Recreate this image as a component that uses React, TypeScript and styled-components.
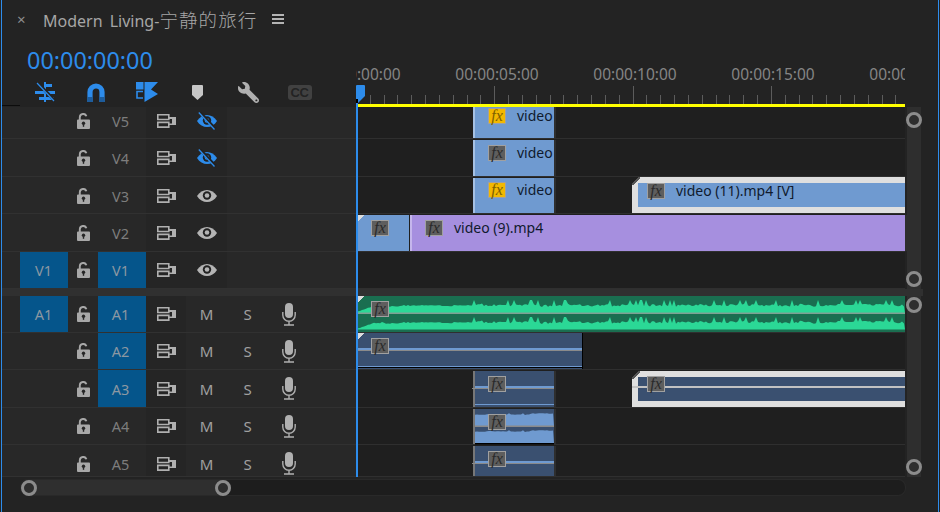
import React from "react";
import styled, { createGlobalStyle } from "styled-components";
import { FaWrench } from "react-icons/fa";

const BLUE = "#2d8ceb";
const ICON = "#b0b0b0";
const CLIP_BLUE = "#6f9ad0";
const SLATE = "#3a5070";

const GlobalStyle = createGlobalStyle`
  html, body {
    margin: 0;
    background: #232323;
  }
  * {
    box-sizing: border-box;
  }
`;

const Panel = styled.div`
  position: relative;
  width: 938px;
  height: 512px;
  margin-left: 1px;
  overflow: hidden;
  background: #232323;
  border-left: 1px solid ${BLUE};
  border-right: 1px solid ${BLUE};
  font-family: "Noto Sans", "Noto Sans CJK SC", sans-serif;
  color: #a8a8a8;
`;

const TitleBar = styled.div`
  display: flex;
  align-items: center;
  height: 38px;
  padding-left: 15px;
`;

const CloseMark = styled.span`
  width: 26px;
  font-size: 15px;
  color: #8f8f8f;
`;

const Title = styled.span`
  font-size: 16px;
  word-spacing: 3px;
  white-space: nowrap;
  color: #a6a6a6;
`;

const TitleCjk = styled.span`
  font-family: "Noto Sans CJK SC", sans-serif;
  font-size: 18.5px;
  font-weight: 300;
  letter-spacing: 1.1px;
`;

const Menu = styled.span`
  width: 12px;
  height: 10px;
  margin-left: 15px;
  border-top: 2px solid #b4b4b4;
  border-bottom: 2px solid #b4b4b4;
  background: linear-gradient(#b4b4b4, #b4b4b4) center / 100% 2px no-repeat;
`;

const TopSection = styled.div`
  display: grid;
  grid-template-columns: 354px 549px;
  height: 69px;
`;

const Controls = styled.div`
  position: relative;
  padding: 8px 0 0 25px;
  &::after {
    content: "";
    position: absolute;
    left: 0;
    bottom: 1px;
    width: 18px;
    height: 1px;
    background: #0c0c0c;
  }
`;

const Timecode = styled.div`
  font-size: 23.4px;
  line-height: 28px;
  color: ${BLUE};
`;

const Tools = styled.div`
  display: flex;
  margin: 6px 0 0 -8px;
`;

const Tool = styled.div`
  display: flex;
  align-items: center;
  justify-content: center;
  width: 51px;
  height: 24px;
`;

const CcBadge = styled.span`
  width: 24px;
  height: 15px;
  border-radius: 3px;
  background: #414141;
  color: #232323;
  font: bold 13px/15px "Liberation Sans", sans-serif;
  text-align: center;
  letter-spacing: -0.5px;
`;

const RulerColumn = styled.div`
  display: flex;
  flex-direction: column;
`;

const Ruler = styled.div`
  position: relative;
  flex: 1;
  overflow: hidden;
`;

const RulerLabel = styled.span<{ $x: number }>`
  position: absolute;
  top: 25px;
  left: ${(p) => p.$x - 42}px;
  width: 84px;
  text-align: center;
  font-size: 15.5px;
  line-height: 22px;
  color: #858585;
`;

const TickLayer = styled.svg`
  position: absolute;
  left: 0;
  bottom: 0;
`;

const YellowBar = styled.div`
  height: 3px;
  margin-left: 2px;
  background: #ffff00;
`;

const TrackGroup = styled.div`
  display: flex;
`;

const Rows = styled.div`
  width: 903px;
`;

const Rail = styled.div<{ $pad: number }>`
  display: flex;
  flex-direction: column;
  justify-content: space-between;
  align-items: center;
  width: 14px;
  margin-left: 2px;
  padding: ${(p) => p.$pad}px 0 2px;
  background: #2e2e2e;
`;

const Knob = styled.span`
  flex: none;
  width: 16px;
  height: 16px;
  border-radius: 50%;
  border: 3px solid #8c8c8c;
  background: #2e2e2e;
`;

const GroupGap = styled.div`
  height: 7px;
  width: 921px;
  background: #303030;
`;

const Row = styled.div<{ $h: number }>`
  display: grid;
  grid-template-columns: 354px 549px;
  height: ${(p) => p.$h}px;
`;

const RowHead = styled.div`
  display: grid;
  grid-template-columns: 18px 48px 30px 48px 40px 41px 41px 41px;
  background: #282828;
  border-bottom: 1px solid #313131;
`;

const Cell = styled.div<{ $dim?: boolean; $nudge: number }>`
  display: flex;
  align-items: center;
  justify-content: center;
  padding: ${(p) => Math.max(p.$nudge, 0)}px 0 ${(p) => Math.max(-p.$nudge, 0)}px;
  background: ${(p) => (p.$dim ? "#252525" : "transparent")};
`;

const Patch = styled.div<{ $on?: boolean; $nudge: number; $trim: number }>`
  display: flex;
  align-items: center;
  justify-content: center;
  padding: ${(p) => Math.max(p.$nudge, 0)}px ${(p) => p.$trim}px ${(p) => Math.max(-p.$nudge, 0)}px 0;
  font-size: 14.5px;
  color: ${(p) => (p.$on ? "#8c98a2" : "#7d7d7d")};
  background: ${(p) => (p.$on ? "#05558b" : "transparent")};
`;

const Solo = styled.span`
  font-size: 15px;
  color: #a0a0a0;
`;

const Lane = styled.div`
  position: relative;
  background: #1f1f1f;
  border-bottom: 1px solid #2f2f2f;
`;

type ClipKind = "video" | "purple" | "selected" | "audio" | "audioSelected" | "wave";

const clipFill: Record<ClipKind, string> = {
  video: CLIP_BLUE,
  purple: "#a68fdf",
  selected: CLIP_BLUE,
  audio: SLATE,
  audioSelected: SLATE,
  wave: "#1a6e50",
};

const clipShadow = (kind: ClipKind, edge?: string, cap?: boolean) => {
  if (kind === "selected" || kind === "audioSelected") {
    return "inset 6px 0 0 #dfdfdf, inset 0 6px 0 #dfdfdf, inset 0 -6px 0 #dfdfdf";
  }
  if (cap) return "1px 0 0 #000";
  return edge ? "2px 0 0 #2e2e2e" : "none";
};

const Clip = styled.div<{
  $x: number;
  $w: number;
  $kind: ClipKind;
  $top: number;
  $pad: number;
  $inset: number;
  $edge?: string;
  $cap?: boolean;
}>`
  position: absolute;
  left: ${(p) => p.$x}px;
  width: ${(p) => p.$w}px;
  top: ${(p) => p.$top}px;
  bottom: 0;
  display: flex;
  align-items: flex-start;
  gap: 11px;
  padding: ${(p) => p.$pad}px 0 0 ${(p) => p.$inset}px;
  background: ${(p) => clipFill[p.$kind]};
  border-left: ${(p) => (p.$edge ? `2px solid ${p.$edge}` : "none")};
  box-shadow: ${(p) => clipShadow(p.$kind, p.$edge, p.$cap)};
`;

const Corner = styled.span<{ $dark?: boolean }>`
  position: absolute;
  left: 0;
  top: 0;
  width: 8px;
  height: 8px;
  background: ${(p) =>
    p.$dark
      ? "linear-gradient(135deg, #1f1f1f 42%, #555 42%, #555 58%, transparent 58%)"
      : "linear-gradient(135deg, #dcdcdc 40%, transparent 40%)"};
`;

const Fx = styled.span<{ $on?: boolean }>`
  position: relative;
  z-index: 1;
  flex: none;
  width: 18px;
  height: 16px;
  border: 1.500px solid #a0a0a0;
  background: ${(p) => (p.$on ? "#f2b800" : "#5e5e5e")};
  color: ${(p) => (p.$on ? "#7d6000" : "#2a2a2a")};
  font: italic 16px/13px "Liberation Serif", serif;
  text-align: center;
`;

const ClipName = styled.span`
  position: relative;
  z-index: 1;
  font-size: 14px;
  line-height: 16px;
  color: #101a2e;
  white-space: nowrap;
`;

const Level = styled.span<{ $y: number; $h: number; $c: string; $from: number }>`
  position: absolute;
  left: ${(p) => p.$from}px;
  right: 0;
  top: ${(p) => p.$y}px;
  height: ${(p) => p.$h}px;
  background: ${(p) => p.$c};
`;

const WaveArt = styled.svg`
  position: absolute;
  left: 0;
  top: 0;
`;

const PlayheadWrap = styled.div`
  position: absolute;
  left: 354px;
  top: 85px;
  width: 9px;
  height: 392px;
  z-index: 3;
`;

const PlayheadHead = styled.svg`
  display: block;
`;

const PlayheadLine = styled.div`
  width: 2px;
  height: 374px;
  background: ${BLUE};
`;

const Footer = styled.div`
  padding: 3px 0 0 19px;
`;

const Trough = styled.div`
  display: flex;
  width: 884px;
  height: 15px;
  border-radius: 7px;
  background: #1d1d1d;
  box-shadow: 0 0 0 1px #292929;
`;

const Thumb = styled.div`
  display: flex;
  justify-content: space-between;
  align-items: center;
  width: 210px;
  border-radius: 7px;
  background: #2f2f2f;
`;

// ---- drawings

const Lock = () => (
  <svg width="13" height="16" viewBox="0 0 13 16">
    <path d="M2.800 7V4.200a3.400 3.400 0 0 1 6.600-1" fill="none" stroke="#a8a8a8" strokeWidth="1.900" />
    <path d="M1 6.500h11a1 1 0 0 1 1 1V15a1 1 0 0 1-1 1H1a1 1 0 0 1-1-1V7.500a1 1 0 0 1 1-1z" fill="#a8a8a8" />
    <circle cx="6.500" cy="10.300" r="1.700" fill="#262626" />
    <rect x="5.800" y="10.500" width="1.400" height="3.300" fill="#262626" />
  </svg>
);

const Sync = () => (
  <svg width="19" height="14" viewBox="0 0 19 14">
    <path d="M.8.800h11v4.700H.8zM.8 8.400h11v4.700H.8z" fill="none" stroke={ICON} strokeWidth="1.600" />
    <path d="M12 3h7v8h-7V9.500h3V5h-3z" fill={ICON} />
  </svg>
);

const Eye = ({ off }: { off?: boolean }) => {
  const c = off ? BLUE : "#b4b4b4";
  return (
    <svg width="20" height="18" viewBox="0 0 20 18">
      <path d="M0 9C5 1 15 1 20 9c-5 8-15 8-20 0z" fill={c} />
      <circle cx="10" cy="8.500" r="4.200" fill="#222" />
      <circle cx="10" cy="8.500" r="2.300" fill={c} />
      {off && (
        <>
          <path d="M3 .5 18.500 17" stroke="#222" strokeWidth="3" />
          <path d="M1.800.500 17.500 17.500" stroke={BLUE} strokeWidth="1.300" />
        </>
      )}
    </svg>
  );
};

const Mic = () => (
  <svg width="14" height="23" viewBox="0 0 14 23">
    <rect x="3" y="0" width="8" height="15" rx="4" fill={ICON} />
    <path d="M.8 9v3a6.200 6.200 0 0 0 12.400 0V9M7 18.200V22M2 22h10" fill="none" stroke={ICON} strokeWidth="1.400" />
  </svg>
);

const NestIcon = () => (
  <svg width="22" height="20" viewBox="0 0 22 20">
    <g fill={BLUE}>
      <rect x="10" y="0" width="2" height="20" />
      <rect x="12" y="2" width="6" height="3" />
      <rect x="1" y="9" width="9" height="3" />
      <rect x="12" y="9" width="9" height="3" />
      <rect x="5" y="15" width="5" height="3" />
      <rect x="12" y="15" width="8" height="3" />
    </g>
    <path d="M3 0 21 19" stroke="#232323" strokeWidth="3" />
    <path d="M3 1 20 19" stroke={BLUE} strokeWidth="1.200" />
  </svg>
);

const Magnet = () => (
  <svg width="18" height="19" viewBox="0 0 18 19">
    <path d="M3 19V9a6 6 0 0 1 12 0v10" fill="none" stroke={BLUE} strokeWidth="5.200" />
    <path d="M3 19v-5M15 19v-5" fill="none" stroke="#1d5c9c" strokeWidth="5.200" />
  </svg>
);

const LinkedSelect = () => (
  <svg width="22" height="20" viewBox="0 0 22 20">
    <rect x="0" y="0" width="7.500" height="7.500" fill={BLUE} />
    <path d="M8.500 0H22l-7 7.500L22 12 8.500 20z" fill={BLUE} />
    <path d="M7 9.500H1v6.500h6" fill="none" stroke={BLUE} strokeWidth="1.600" />
  </svg>
);

const Marker = () => (
  <svg width="11" height="15" viewBox="0 0 11 15">
    <path d="M1 0h9a1 1 0 0 1 1 1v9l-5.500 5L0 10V1a1 1 0 0 1 1-1z" fill="#c6c6c6" />
  </svg>
);

const MirroredWrench = styled(FaWrench)`
  width: 21px;
  height: 21px;
  color: ${ICON};
  transform: scaleX(-1);
`;

// pseudo random but stable from one render to the next
const noise = (seed: number, i: number) => {
  const v = Math.sin(i * 127.1 + seed * 311.7 + i * i * 0.37) * 43758.5453;
  return v - Math.floor(v);
};

const wavePoints = (
  width: number,
  seed: number,
  floor: number,
  base: (x: number) => number,
  swing: (x: number) => number,
) => {
  let d = `M0 ${floor}`;
  for (let x = 0; x <= width; x += 2) {
    const n = noise(seed, x / 2);
    const chunk = noise(seed + 1, Math.floor(x / 14)) * 1.400;
    const peak = n > 0.88 ? swing(x) * 1.400 : n * swing(x) * 0.500 + chunk;
    d += `L${x} ${(base(x) - peak).toFixed(1)}`;
  }
  return `${d}L${width} ${floor}Z`;
};

const GreenWave = ({ width }: { width: number }) => {
  const ramp = (x: number) => Math.max(0, 5 - x / 3);
  const swing = (x: number) => (x < 115 ? 1.500 : 5);
  return (
    <WaveArt width={width} height="37" viewBox={`0 0 ${width} 37`}>
      <path d={wavePoints(width, 3, 17, (x) => 11 + ramp(x), swing)} fill="#2bd896" />
      <rect x="0" y="16.500" width={width} height="1.500" fill="#7f9f93" />
      <path d={wavePoints(width, 3, 33.500, (x) => 28 + ramp(x), swing)} fill="#2bd896" />
    </WaveArt>
  );
};

const BlueWave = ({ width }: { width: number }) => {
  const swing = () => 1.200;
  return (
    <WaveArt width={width} height="36" viewBox={`0 0 ${width} 36`}>
      <path d={wavePoints(width, 7, 17, () => 6, swing)} fill={CLIP_BLUE} />
      <rect x="0" y="16.500" width={width} height="1.500" fill="#8a8a8a" />
      <path d={wavePoints(width, 7, 34, () => 23, swing)} fill={CLIP_BLUE} />
      <rect x="0" y="34" width={width} height="1.500" fill="#000" />
    </WaveArt>
  );
};

// ---- data

type LevelLine = { y: number; h: number; c: string; from?: number };

type ClipData = {
  x: number;
  w: number;
  kind: ClipKind;
  fx?: boolean;
  name?: string;
  top?: number;
  pad?: number;
  inset?: number;
  edge?: string;
  corner?: boolean;
  cap?: boolean;
  lines?: LevelLine[];
  art?: "green" | "blue";
};

type Track = {
  label: string;
  h: number;
  nudge?: number;
  source?: string;
  target?: boolean;
  eyeOff?: boolean;
  clips: ClipData[];
};

const shortVideo = (fx: boolean, pad: number): ClipData => ({
  x: 117,
  w: 81,
  kind: "video",
  fx,
  name: "video",
  edge: "#a5c0e3",
  inset: 13,
  pad,
  top: 1,
});

const shortAudio = (lines?: LevelLine[], art?: "blue"): ClipData => ({
  x: 117,
  w: 81,
  kind: "audio",
  edge: "#777",
  inset: 13,
  lines,
  art,
});

const grey: LevelLine = { y: 17, h: 1, c: "#8a8a8a", from: -3 };
const blueBand: LevelLine = { y: 15, h: 2, c: CLIP_BLUE };

const videoTracks: Track[] = [
  { label: "V5", h: 32, nudge: -4, eyeOff: true, clips: [{ ...shortVideo(true, 1), top: 0 }] },
  { label: "V4", h: 38, eyeOff: true, clips: [shortVideo(false, 5)] },
  {
    label: "V3",
    h: 37,
    nudge: 1,
    clips: [
      shortVideo(true, 4),
      { x: 276, w: 273, kind: "selected", name: "video (11).mp4 [V]", top: 0, pad: 6, corner: true },
    ],
  },
  {
    label: "V2",
    h: 38,
    clips: [
      { x: 2, w: 51, kind: "video", inset: 13, corner: true },
      { x: 54, w: 495, kind: "purple", name: "video (9).mp4", edge: "#c5b6ec", inset: 13 },
    ],
  },
  { label: "V1", h: 37, source: "V1", target: true, clips: [] },
];

const audioTracks: Track[] = [
  {
    label: "A1",
    h: 37,
    source: "A1",
    target: true,
    clips: [{ x: 2, w: 547, kind: "wave", top: 0, inset: 13, corner: true, art: "green" }],
  },
  {
    label: "A2",
    h: 37,
    target: true,
    clips: [
      {
        x: 2,
        w: 224,
        kind: "audio",
        top: 0,
        inset: 13,
        corner: true,
        cap: true,
        lines: [blueBand, { y: 17, h: 1, c: "#8a8a8a" }, { y: 33, h: 1, c: CLIP_BLUE }, { y: 34, h: 1, c: "#000" }],
      },
    ],
  },
  {
    label: "A3",
    h: 38,
    target: true,
    clips: [
      shortAudio([blueBand, grey, { y: 33, h: 1, c: CLIP_BLUE }]),
      { x: 276, w: 273, kind: "audioSelected", corner: true, lines: [{ y: 15, h: 2, c: "#c2c2c2" }] },
    ],
  },
  { label: "A4", h: 37, clips: [shortAudio(undefined, "blue")] },
  { label: "A5", h: 32, nudge: 6, clips: [shortAudio([blueBand, grey])] },
];

const rulerLabels = [3, 141, 279, 417, 555];
const PX_PER_TICK = 13.83;

const ClipView = ({ clip }: { clip: ClipData }) => (
  <Clip
    $x={clip.x}
    $w={clip.w}
    $kind={clip.kind}
    $top={clip.top ?? 1}
    $pad={clip.pad ?? 5}
    $inset={clip.inset ?? 15}
    $edge={clip.edge}
    $cap={clip.cap}
  >
    {clip.art === "green" && <GreenWave width={clip.w} />}
    {clip.art === "blue" && <BlueWave width={clip.w - 2} />}
    {clip.lines?.map((line) => (
      <Level key={`${line.y}${line.c}`} $y={line.y} $h={line.h} $c={line.c} $from={line.from ?? 0} />
    ))}
    {clip.corner && <Corner $dark={clip.kind === "selected" || clip.kind === "audioSelected"} />}
    <Fx $on={clip.fx}>fx</Fx>
    {clip.name && <ClipName>{clip.name}</ClipName>}
  </Clip>
);

const TrackRow = ({ track, audio }: { track: Track; audio?: boolean }) => {
  const nudge = track.nudge ?? 0;
  return (
    <Row $h={track.h}>
      <RowHead>
        <span />
        <Patch $on={!!track.source} $nudge={nudge} $trim={1}>
          {track.source}
        </Patch>
        <Cell $nudge={nudge}>
          <Lock />
        </Cell>
        <Patch $on={track.target} $nudge={nudge} $trim={3}>
          {track.label}
        </Patch>
        <Cell $dim $nudge={nudge}>
          <Sync />
        </Cell>
        {audio ? (
          <>
            <Cell $nudge={nudge}>
              <Solo>M</Solo>
            </Cell>
            <Cell $nudge={nudge}>
              <Solo>S</Solo>
            </Cell>
            <Cell $nudge={nudge}>
              <Mic />
            </Cell>
          </>
        ) : (
          <Cell $dim $nudge={nudge}>
            <Eye off={track.eyeOff} />
          </Cell>
        )}
      </RowHead>
      <Lane>
        {track.clips.map((clip) => (
          <ClipView key={`${clip.kind}${clip.x}`} clip={clip} />
        ))}
      </Lane>
    </Row>
  );
};

const App: React.FC = () => (
  <Panel>
    <GlobalStyle />
    <TitleBar>
      <CloseMark>×</CloseMark>
      <Title>
        Modern Living-<TitleCjk>宁静的旅行</TitleCjk>
      </Title>
      <Menu />
    </TitleBar>

    <TopSection>
      <Controls>
        <Timecode>00:00:00:00</Timecode>
        <Tools>
          <Tool>
            <NestIcon />
          </Tool>
          <Tool>
            <Magnet />
          </Tool>
          <Tool>
            <LinkedSelect />
          </Tool>
          <Tool>
            <Marker />
          </Tool>
          <Tool>
            <MirroredWrench />
          </Tool>
          <Tool>
            <CcBadge>CC</CcBadge>
          </Tool>
        </Tools>
      </Controls>
      <RulerColumn>
        <Ruler>
          {rulerLabels.map((x, i) => (
            <RulerLabel key={x} $x={x}>
              00:00:{String(i * 5).padStart(2, "0")}:00
            </RulerLabel>
          ))}
          <TickLayer width="549" height="20">
            {Array.from({ length: 40 }, (_, i) => {
              const x = Math.round(i * PX_PER_TICK) + 0.5;
              return <line key={i} x1={x} x2={x} y1={i % 10 === 0 ? 2 : 11} y2="20" stroke="#5c5c5c" />;
            })}
          </TickLayer>
        </Ruler>
        <YellowBar />
      </RulerColumn>
    </TopSection>

    <TrackGroup>
      <Rows>
        {videoTracks.map((track) => (
          <TrackRow key={track.label} track={track} />
        ))}
      </Rows>
      <Rail $pad={5}>
        <Knob />
        <Knob />
      </Rail>
    </TrackGroup>
    <GroupGap />
    <TrackGroup>
      <Rows>
        {audioTracks.map((track) => (
          <TrackRow key={track.label} track={track} audio />
        ))}
      </Rows>
      <Rail $pad={1}>
        <Knob />
        <Knob />
      </Rail>
    </TrackGroup>

    <Footer>
      <Trough>
        <Thumb>
          <Knob />
          <Knob />
        </Thumb>
      </Trough>
    </Footer>

    <PlayheadWrap>
      <PlayheadHead width="9" height="18" viewBox="0 0 9 18">
        <path d="M0 1a1 1 0 0 1 1-1h7a1 1 0 0 1 1 1v10l-7 7H0z" fill={BLUE} />
        <rect x="0" y="14" width="2" height="4" fill="#000" />
      </PlayheadHead>
      <PlayheadLine />
    </PlayheadWrap>
  </Panel>
);

export default App;
